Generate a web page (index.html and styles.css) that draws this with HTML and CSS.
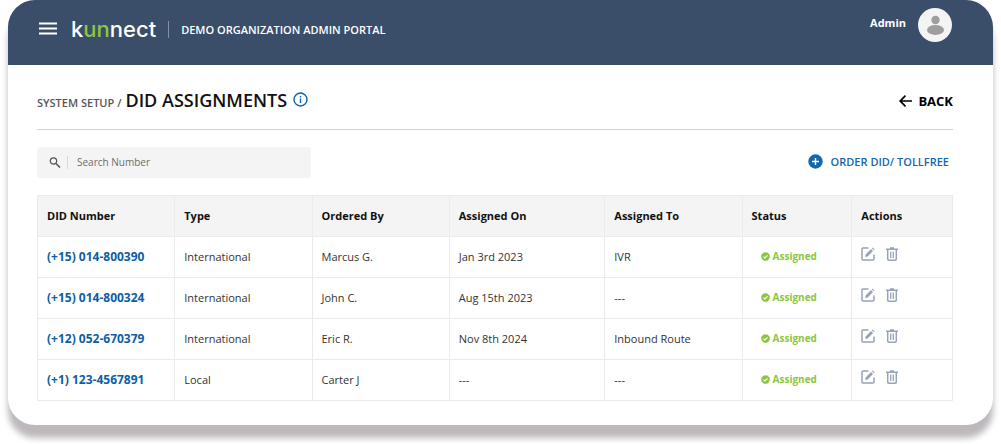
FILE: index.html
```html
<!DOCTYPE html>
<html lang="en">
<head>
<meta charset="utf-8">
<title>DID Assignments</title>
<link rel="stylesheet" href="styles.css">
</head>
<body>
<svg class="symbols" aria-hidden="true">
  <symbol id="check" viewBox="0 0 24 24"><circle cx="12" cy="12" r="11" fill="currentColor" stroke="currentColor" stroke-width="1.500" stroke-dasharray="5 3.600"/><path d="M6.500 12.200l3.800 3.800L17.500 9" fill="none" stroke="#fff" stroke-width="2.800"/></symbol>
  <symbol id="edit" viewBox="0 0 14 14"><path d="M7.500 1H2Q1 1 1 2v10q0 1 1 1h10q1 0 1-1V7.500" fill="none" stroke="currentColor" stroke-width="1.500"/><path d="M4.200 10l.4-2.600L10 2l2 2-5.300 5.400zM10.800 1.300l.8-.8 2 2-.8.800z" fill="currentColor"/></symbol>
  <symbol id="trash" viewBox="0 0 12 14"><path d="M0 2.200h12M4 1h4M1.700 2.200V12q0 1.200 1.200 1.200h6.200q1.200 0 1.200-1.200V2.200" fill="none" stroke="currentColor" stroke-width="1.500"/><path d="M4.700 4.500v6.500M7.300 4.500v6.500" stroke="currentColor" stroke-width="1.300"/></symbol>
</svg>
<div class="card">
  <header class="topbar">
    <button class="menu" aria-label="Menu"><svg width="18" height="14" viewBox="0 0 18 14"><path d="M0 1.500h18M0 6.500h18M0 11.500h18" stroke="#fff" stroke-width="2"/></svg></button>
    <a class="logo" href="#">k<span>un</span>nect</a>
    <span class="portal">DEMO ORGANIZATION ADMIN PORTAL</span>
    <div class="account"><span>Admin</span>
      <svg class="avatar" viewBox="0 0 34 34"><circle cx="17" cy="17" r="17" fill="#f4f4f4"/><circle cx="17.500" cy="12" r="4.200" fill="#9e9e9e"/><ellipse cx="17.500" cy="22" rx="8.500" ry="5" fill="#9e9e9e"/></svg>
    </div>
  </header>
  <main class="content">
    <div class="heading">
      <span class="crumb">SYSTEM SETUP /</span>
      <h1>DID ASSIGNMENTS</h1>
      <button class="info" aria-label="Information"><svg width="15" height="15" viewBox="0 0 15 15"><circle cx="7.500" cy="7.500" r="6.500" fill="none" stroke="currentColor" stroke-width="1.400"/><path d="M7.500 6.500v4.500M7.500 4v1.500" stroke="currentColor" stroke-width="1.400"/></svg></button>
      <a class="back" href="#"><svg width="14" height="12" viewBox="0 0 14 12"><path d="M13 6H1.500M6.500 .7L1.200 6l5.300 5.300" fill="none" stroke="currentColor" stroke-width="1.700"/></svg>BACK</a>
    </div>
    <div class="tools">
      <label class="search"><svg width="12" height="12" viewBox="0 0 12 12"><circle cx="4.500" cy="4" r="3.200" fill="none" stroke="currentColor" stroke-width="1.200"/><path d="M7 6.500l4 4" stroke="currentColor" stroke-width="1.600"/></svg><input type="text" placeholder="Search Number" aria-label="Search Number"></label>
      <button class="order"><svg width="15" height="15" viewBox="0 0 15 15"><circle cx="7.500" cy="7.500" r="7.200" fill="currentColor"/><path d="M7.500 4v7M4 7.500h7" stroke="#fff" stroke-width="1.400"/></svg>ORDER DID/ TOLLFREE</button>
    </div>
    <table>
      <colgroup><col class="w15"><col class="w15"><col class="w15"><col class="w17"><col class="w15"><col class="w12"><col class="w11"></colgroup>
      <thead><tr><th>DID Number</th><th>Type</th><th>Ordered By</th><th>Assigned On</th><th>Assigned To</th><th>Status</th><th>Actions</th></tr></thead>
      <tbody>
        <tr><td><a href="#">(+15) 014-800390</a></td><td>International</td><td>Marcus G.</td><td>Jan 3rd 2023</td><td>IVR</td><td><span class="status"><svg><use href="#check"/></svg>Assigned</span></td><td><div class="actions"><button aria-label="Edit"><svg class="edit"><use href="#edit"/></svg></button><button aria-label="Delete"><svg class="trash"><use href="#trash"/></svg></button></div></td></tr>
        <tr><td><a href="#">(+15) 014-800324</a></td><td>International</td><td>John C.</td><td>Aug 15th 2023</td><td>---</td><td><span class="status"><svg><use href="#check"/></svg>Assigned</span></td><td><div class="actions"><button aria-label="Edit"><svg class="edit"><use href="#edit"/></svg></button><button aria-label="Delete"><svg class="trash"><use href="#trash"/></svg></button></div></td></tr>
        <tr><td><a href="#">(+12) 052-670379</a></td><td>International</td><td>Eric R.</td><td>Nov 8th 2024</td><td>Inbound Route</td><td><span class="status"><svg><use href="#check"/></svg>Assigned</span></td><td><div class="actions"><button aria-label="Edit"><svg class="edit"><use href="#edit"/></svg></button><button aria-label="Delete"><svg class="trash"><use href="#trash"/></svg></button></div></td></tr>
        <tr><td><a href="#">(+1) 123-4567891</a></td><td>Local</td><td>Carter J</td><td>---</td><td>---</td><td><span class="status"><svg><use href="#check"/></svg>Assigned</span></td><td><div class="actions"><button aria-label="Edit"><svg class="edit"><use href="#edit"/></svg></button><button aria-label="Delete"><svg class="trash"><use href="#trash"/></svg></button></div></td></tr>
      </tbody>
    </table>
  </main>
</div>
</body>
</html>
```
FILE: styles.css
```css
* { box-sizing: border-box; }
body { margin: 0; background: #fff; font-family: "Open Sans", sans-serif; font-size: 11px; color: #333; }
button { border: 0; background: none; padding: 0; font: inherit; color: inherit; cursor: pointer; }
a { color: inherit; text-decoration: none; }
svg { display: block; flex: none; }
.symbols { position: absolute; width: 0; height: 0; }
.card { margin: 0 8px 19px; border-radius: 27px; overflow: hidden; background: #fff; box-shadow: 0 13px 6px #bcb8bc; }
.topbar { height: 65px; padding: 8px 41px 0 31px; display: flex; align-items: flex-start; background: #3a4d69; color: #fff; }
.menu { margin-top: 14px; }
.logo { margin: 4px 0 0 14px; font: 500 22px/34px Inter, sans-serif; }
.logo span { color: #8dc63f; }
.portal { margin: 13px 0 0 12px; padding-left: 12px; border-left: 1px solid #8390a3; font-size: 11px; line-height: 17px; font-weight: 600; }
.account { margin-left: auto; display: flex; gap: 12px; font-weight: 700; line-height: 30px; }
.avatar { width: 34px; height: 34px; }
.content { padding: 21px 40px 24px 29px; }
.heading { display: flex; align-items: baseline; height: 44px; border-bottom: 1px solid #d2d2d2; }
.crumb { font-size: 11px; font-weight: 600; color: #555; margin-right: 4px; }
h1 { margin: 0; font-size: 18px; line-height: 28px; font-weight: 600; color: #111; }
.info { align-self: flex-start; margin: 6px 0 0 6px; color: #0d62a8; }
.back { margin-left: auto; display: flex; align-items: center; gap: 5px; font-size: 13px; font-weight: 700; color: #000; }
.tools { display: flex; justify-content: space-between; align-items: center; margin: 17px 0; padding-right: 4px; }
.search { width: 30%; height: 31px; display: flex; align-items: center; background: #f4f4f4; border-radius: 3px; padding: 0 12px; color: #555; }
.search input { flex: 1; min-width: 0; height: 13px; border: 0; border-left: 1px solid #d8d8d8; margin-left: 6px; padding: 0 0 0 9px; background: none; font: 10px/13px "Open Sans", sans-serif; outline: 0; }
.search input::placeholder { color: #6c6c6c; }
.order { display: flex; align-items: center; gap: 8px; color: #1467ab; font-weight: 600; font-size: 11px; line-height: 15px; padding-bottom: 2px; }
table { width: 100%; table-layout: fixed; border-collapse: collapse; }
.w15 { width: 15%; }
.w17 { width: 17%; }
.w12 { width: 12%; }
.w11 { width: 11%; }
th, td { height: 41px; padding: 0 9px 2px; border: 1px solid #ebebeb; text-align: left; }
th { background: #f4f4f4; color: #111; font-weight: 700; }
td a { color: #0d5ea3; font-size: 12px; font-weight: 700; }
.status { display: flex; align-items: center; gap: 3px; padding-left: 9px; color: #8cc641; font-size: 10px; font-weight: 700; }
.status svg { width: 9px; height: 9px; }
.actions { display: flex; align-items: center; gap: 11px; padding-bottom: 4px; color: #98a3b6; }
.edit { width: 14px; height: 14px; }
.trash { width: 12px; height: 14px; }
```
